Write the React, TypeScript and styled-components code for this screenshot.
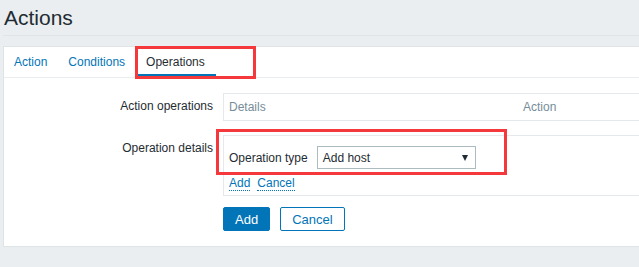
import React from "react";
import styled, { createGlobalStyle } from "styled-components";

const GlobalStyle = createGlobalStyle`
  body {
    margin: 0;
    background: #ebeef0;
    font-family: "Liberation Sans", Arial, sans-serif;
    font-size: 12px;
    color: #1f2c33;
  }
`;

const Page = styled.div`
  width: 639px;
  height: 267px;
  overflow: hidden;
`;

const Header = styled.header`
  margin-left: 3px;
  height: 36px;
  border-bottom: 1px solid #dfe4e7;
  box-sizing: border-box;
`;

const Title = styled.h1`
  margin: 0;
  padding: 6px 0 0 1px;
  font-size: 21px;
  font-weight: normal;
  line-height: 24px;
  color: #1f2c33;
`;

const Panel = styled.div`
  margin: 10px 0 0 3px;
  width: 700px;
  height: 201px;
  background: #ffffff;
  border: 1px solid #dfe4e7;
  box-sizing: border-box;
`;

const TabBar = styled.nav`
  display: flex;
  gap: 5px;
  padding-left: 2px;
  height: 31px;
  border-bottom: 1px solid #ebeef0;
  box-sizing: border-box;
`;

const Tab = styled.div<{ $active?: boolean }>`
  position: relative;
  display: flex;
  align-items: center;
  padding: 2px 8px 0;
  min-width: ${(p) => (p.$active ? "78px" : "0")};
  height: 30px;
  box-sizing: border-box;
  color: ${(p) => (p.$active ? "#1f2c33" : "#0275b8")};
  border-bottom: 3px solid ${(p) => (p.$active ? "#0275b8" : "transparent")};
`;

const Highlight = styled.div<{ $t: number; $r: number; $b: number; $l: number }>`
  position: absolute;
  top: ${(p) => p.$t}px;
  right: ${(p) => p.$r}px;
  bottom: ${(p) => p.$b}px;
  left: ${(p) => p.$l}px;
  border: 3px solid #f5383b;
  pointer-events: none;
`;

const Form = styled.div`
  display: grid;
  grid-template-columns: 219px 1fr;
  row-gap: 14px;
  padding-top: 15px;
`;

const Label = styled.div`
  text-align: right;
  padding: 6px 10px 0 0;
  line-height: 14px;
`;

const TableBox = styled.div`
  border: 1px solid #e5e9eb;
  height: 28px;
  box-sizing: border-box;
  display: grid;
  grid-template-columns: 294px 1fr;
  align-items: center;
  padding-left: 5px;
  color: #768d99;
`;

const DetailsBox = styled.div`
  border: 1px solid #e5e9eb;
  padding: 10px 5px 5px;
  height: 61px;
  box-sizing: border-box;
`;

const FieldRow = styled.div`
  position: relative;
  display: flex;
  align-items: center;
  gap: 9px;
  width: 248px;
`;

const Select = styled.div`
  display: flex;
  align-items: center;
  justify-content: space-between;
  width: 159px;
  height: 23px;
  box-sizing: border-box;
  border: 1px solid #acbbc0;
  padding: 0 7px 0 5px;
  color: #1f2c33;
`;

const Caret = styled.span`
  width: 0;
  height: 0;
  border-left: 3.5px solid transparent;
  border-right: 3.5px solid transparent;
  border-top: 6px solid #1f2c33;
`;

const LinkRow = styled.div`
  display: flex;
  gap: 7px;
  margin-top: 7px;
  line-height: 14px;
`;

const Link = styled.span`
  color: #0275b8;
  border-bottom: 1px dotted #0275b8;
`;

const Buttons = styled.div`
  display: flex;
  gap: 10px;
  margin-top: -3px;
`;

const Button = styled.button<{ $primary?: boolean }>`
  height: 24px;
  padding: 0 11px;
  font-family: "Liberation Sans", Arial, sans-serif;
  font-size: 13px;
  border-radius: 2px;
  border: 1px solid #0275b8;
  background: ${(p) => (p.$primary ? "#0275b8" : "#ffffff")};
  color: ${(p) => (p.$primary ? "#ffffff" : "#0275b8")};
`;

export default function App() {
  return (
    <Page>
      <GlobalStyle />
      <Header>
        <Title>Actions</Title>
      </Header>
      <Panel>
        <TabBar>
          <Tab>Action</Tab>
          <Tab>Conditions</Tab>
          <Tab $active>
            Operations
            <Highlight $t={-1} $r={-40} $b={-5} $l={-3} />
          </Tab>
        </TabBar>
        <Form>
          <Label>Action operations</Label>
          <TableBox>
            <span>Details</span>
            <span>Action</span>
          </TableBox>
          <Label>Operation details</Label>
          <DetailsBox>
            <FieldRow>
              <span>Operation type</span>
              <Select>
                <span>Add host</span>
                <Caret />
              </Select>
              <Highlight $t={-17} $r={-30} $b={-6} $l={-13} />
            </FieldRow>
            <LinkRow>
              <Link>Add</Link>
              <Link>Cancel</Link>
            </LinkRow>
          </DetailsBox>
          <div />
          <Buttons>
            <Button $primary>Add</Button>
            <Button>Cancel</Button>
          </Buttons>
        </Form>
      </Panel>
    </Page>
  );
}
